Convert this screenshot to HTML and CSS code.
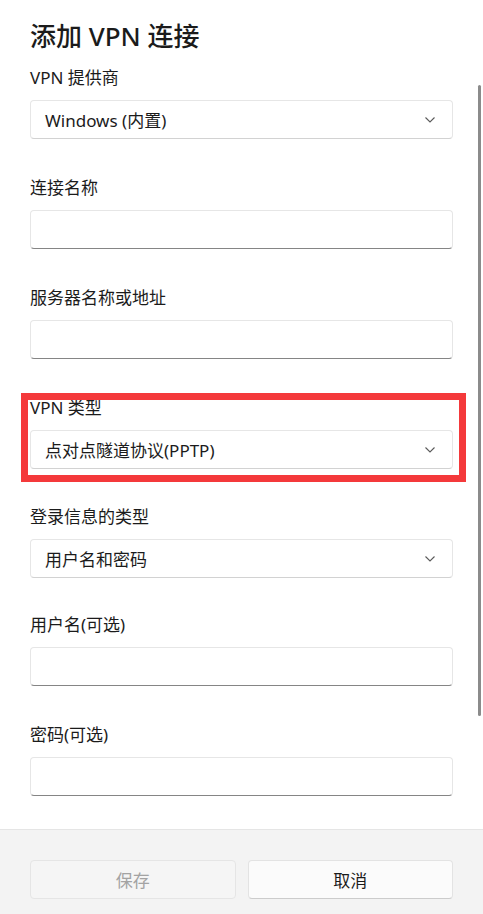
FILE: index.html
```html
<!DOCTYPE html>
<html lang="zh-CN">
<head>
<meta charset="utf-8">
<title>添加 VPN 连接</title>
<link rel="stylesheet" href="styles.css">
</head>
<body>
<div class="dialog">
  <div class="content">
    <h1 class="title">添加 VPN 连接</h1>

    <div class="field">
      <div class="label">VPN 提供商</div>
      <div class="select"><span>Windows (内置)</span>
        <svg class="chev" width="10" height="6" viewBox="0 0 10 6"><path d="M0.5 0.5 L5 5 L9.5 0.5" fill="none" stroke="#5a5a5a" stroke-width="1.1"/></svg>
      </div>
    </div>

    <div class="field">
      <div class="label">连接名称</div>
      <div class="input"></div>
    </div>

    <div class="field">
      <div class="label">服务器名称或地址</div>
      <div class="input"></div>
    </div>

    <div class="field highlighted tight1">
      <div class="label">VPN 类型</div>
      <div class="select"><span>点对点隧道协议(PPTP)</span>
        <svg class="chev" width="10" height="6" viewBox="0 0 10 6"><path d="M0.5 0.5 L5 5 L9.5 0.5" fill="none" stroke="#5a5a5a" stroke-width="1.1"/></svg>
      </div>
      <div class="mark"></div>
    </div>

    <div class="field tight2">
      <div class="label">登录信息的类型</div>
      <div class="select"><span>用户名和密码</span>
        <svg class="chev" width="10" height="6" viewBox="0 0 10 6"><path d="M0.5 0.5 L5 5 L9.5 0.5" fill="none" stroke="#5a5a5a" stroke-width="1.1"/></svg>
      </div>
    </div>

    <div class="field">
      <div class="label">用户名(可选)</div>
      <div class="input"></div>
    </div>

    <div class="field">
      <div class="label">密码(可选)</div>
      <div class="input"></div>
    </div>

    <div class="scrollbar"></div>
  </div>

  <div class="footer">
    <div class="btn disabled">保存</div>
    <div class="btn">取消</div>
  </div>
</div>
</body>
</html>
```

FILE: styles.css
```css
* { box-sizing: border-box; }
html, body {
  margin: 0;
  padding: 0;
  background: #ffffff;
}
body {
  font-family: "Noto Sans", "Noto Sans CJK SC", sans-serif;
  color: #1b1b1b;
}
.dialog {
  width: 483px;
  height: 914px;
  display: flex;
  flex-direction: column;
}
.content {
  position: relative;
  height: 829px;
  padding: 18px 30px 0 30px;
  overflow: hidden;
}
.title {
  margin: 0 0 12px 0;
  font-size: 26px;
  line-height: 36px;
  font-weight: 500;
  color: #1b1b1b;
}
.field {
  position: relative;
  margin-bottom: 37px;
}
.field.tight1 { margin-bottom: 36px; }
.field.tight2 { margin-bottom: 35px; }
.label {
  font-size: 17px;
  line-height: 24px;
  height: 24px;
  margin-bottom: 10px;
}
.select, .input {
  height: 39px;
  border-radius: 4px;
  background: #ffffff;
  border: 1px solid #e6e6e6;
}
.select {
  display: flex;
  align-items: center;
  justify-content: space-between;
  padding: 0 17px 0 14px;
  border-bottom-color: #d2d2d2;
  font-size: 17px;
}
.input {
  border-bottom: 1px solid #858585;
}
.chev { display: block; }
.mark {
  position: absolute;
  left: -9px;
  right: -13px;
  top: -3px;
  bottom: -13px;
  border: 7px solid #f4393b;
  pointer-events: none;
}
.scrollbar {
  position: absolute;
  left: 478px;
  top: 85px;
  width: 3px;
  height: 631px;
  border-radius: 2px;
  background: #8b8b8b;
}
.footer {
  flex: 1;
  background: #f3f3f3;
  border-top: 1px solid #e5e5e5;
  padding: 30px 30px 0 30px;
  display: flex;
  gap: 12px;
}
.btn {
  flex: 1;
  height: 39px;
  border-radius: 4px;
  background: #fbfbfb;
  border: 1px solid #e3e3e3;
  border-bottom-color: #cccccc;
  display: flex;
  align-items: center;
  justify-content: center;
  font-size: 17px;
  color: #1b1b1b;
}
.btn.disabled {
  background: #f5f5f5;
  border-color: #e5e5e5;
  color: #a3a3a3;
}
```
